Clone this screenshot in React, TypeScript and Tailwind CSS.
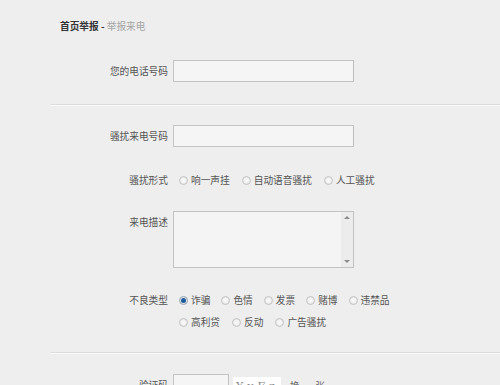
import type { ReactNode } from 'react';

const font = { fontFamily: '"Noto Sans CJK SC", "Noto Sans", sans-serif' };

function Radio({ label, checked = false }: { label: string; checked?: boolean }) {
  return (
    <span className="flex items-center gap-[3px]">
      <span
        className={`flex items-center justify-center w-[9px] h-[9px] rounded-full border ${
          checked ? 'border-[#9aa4ae] bg-[#dfe4ea]' : 'border-[#c4c4c4] bg-[#e9e9e9]'
        }`}
      >
        {checked ? (
          <span className="w-[5px] h-[5px] rounded-full bg-[#1d5d9c]" />
        ) : (
          <span className="w-[5px] h-[5px] rounded-full bg-[#f6f6f6]" />
        )}
      </span>
      <span>{label}</span>
    </span>
  );
}

function Row({ label, children, top = false }: { label: string; children: ReactNode; top?: boolean }) {
  return (
    <div className={`flex ${top ? 'items-start' : 'items-center'}`}>
      <div className={`w-[168px] shrink-0 text-right text-[#555] ${top ? 'pt-[5px]' : ''}`}>{label}</div>
      {children}
    </div>
  );
}

function Divider() {
  return <div className="ml-[51px] h-[2px] border-t border-[#dcdcdc] border-b border-b-[#fbfbfb]" />;
}

function TextBox({ width = 'w-[181px]' }: { width?: string }) {
  return <div className={`ml-[5px] ${width} h-[22px] border border-[#c3c3c3] border-r-[#bdbdbd] bg-[#f5f5f5]`} />;
}

export default function App() {
  return (
    <div className="min-h-[385px] bg-[#eeeeee] text-[9.7px] leading-[12px]" style={font}>
      <div className="pt-[20px] pl-[60px]">
        <span className="font-bold text-[#333]">首页举报 - </span>
        <span className="text-[#a5a5a5]">举报来电</span>
      </div>

      <div className="mt-[28px]">
        <Row label="您的电话号码">
          <TextBox />
        </Row>
      </div>

      <div className="mt-[22px]">
        <Divider />
      </div>

      <div className="mt-[19px]">
        <Row label="骚扰来电号码">
          <TextBox />
        </Row>
      </div>

      <div className="mt-[22px] h-[22px] flex items-center">
        <Row label="骚扰形式">
          <div className="ml-[11px] flex items-center gap-x-[12px] text-[#555]">
            <Radio label="响一声挂" />
            <Radio label="自动语音骚扰" />
            <Radio label="人工骚扰" />
          </div>
        </Row>
      </div>

      <div className="mt-[20px]">
        <Row label="来电描述" top>
          <div className="ml-[5px] w-[181px] h-[57px] flex border border-[#c3c3c3] bg-[#f4f4f4]">
            <div className="flex-1" />
            <div className="w-[12px] flex flex-col items-center justify-between py-[4px] bg-[#ececec]">
              <span className="w-0 h-0 border-x-[3px] border-x-transparent border-b-[3px] border-b-[#8a8a8a]" />
              <span className="w-0 h-0 border-x-[3px] border-x-transparent border-t-[3px] border-t-[#8a8a8a]" />
            </div>
          </div>
        </Row>
      </div>

      <div className="mt-[21px]">
        <Row label="不良类型" top>
          <div className="ml-[11px] flex flex-col text-[#555]">
            <div className="h-[22px] flex items-center gap-x-[11px]">
              <Radio label="诈骗" checked />
              <Radio label="色情" />
              <Radio label="发票" />
              <Radio label="赌博" />
              <Radio label="违禁品" />
            </div>
            <div className="h-[22px] flex items-center gap-x-[12px]">
              <Radio label="高利贷" />
              <Radio label="反动" />
              <Radio label="广告骚扰" />
            </div>
          </div>
        </Row>
      </div>

      <div className="mt-[19px]">
        <Divider />
      </div>

      <div className="mt-[20px] flex items-start">
        <div className="w-[168px] shrink-0 text-right text-[#555] pt-[5px]">验证码</div>
        <div className="ml-[5px] w-[56px] h-[22px] border border-[#c3c3c3] bg-[#f5f5f5]" />
        <div className="ml-[4px] mt-[3px] w-[48px] h-[20px] bg-white text-[#888] text-[11px] leading-[20px] pl-[3px] tracking-[4px]" style={{ fontFamily: '"DejaVu Serif", serif' }}>
          YvFz
        </div>
        <div className="ml-[9px] pt-[6px] text-[#666] tracking-[3px]">换一张</div>
      </div>
    </div>
  );
}
